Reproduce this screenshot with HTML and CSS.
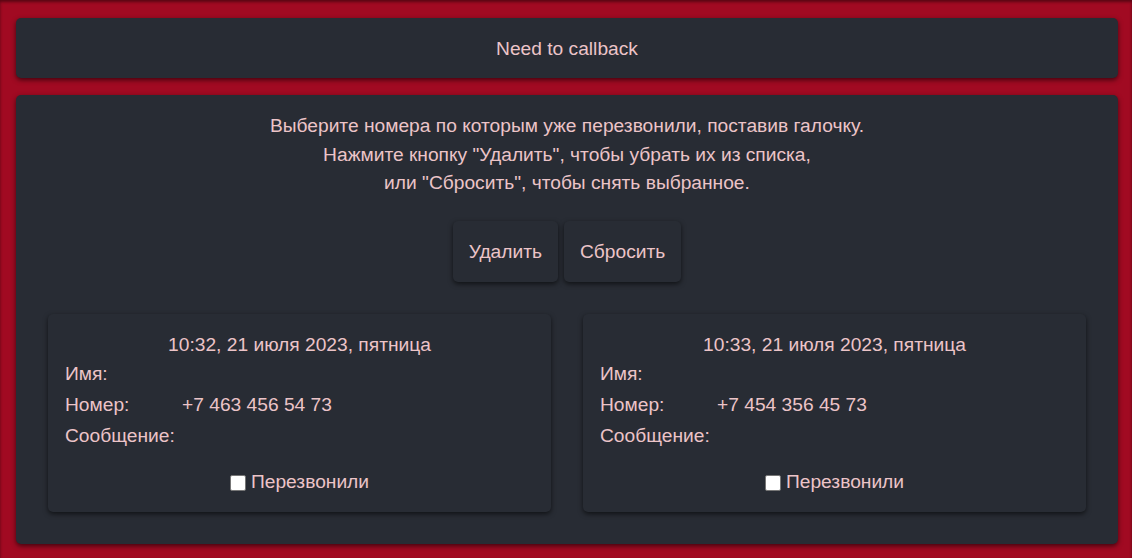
FILE: index.html
```html
<!DOCTYPE html>
<html lang="ru">
<head>
<meta charset="utf-8">
<title>Need to callback</title>
<link rel="stylesheet" href="styles.css">
</head>
<body>
<div class="page">
  <header class="panel header">Need to callback</header>
  <main class="panel main">
    <p class="intro">Выберите номера по которым уже перезвонили, поставив галочку.<br>Нажмите кнопку "Удалить", чтобы убрать их из списка,<br>или "Сбросить", чтобы снять выбранное.</p>
    <div class="actions">
      <button class="btn">Удалить</button>
      <button class="btn">Сбросить</button>
    </div>
    <div class="cards">
      <div class="card">
        <div class="date">10:32, 21 июля 2023, пятница</div>
        <div class="fields">
          <span class="label">Имя:</span><span class="value"></span>
          <span class="label">Номер:</span><span class="value">+7 463 456 54 73</span>
          <span class="label">Сообщение:</span><span class="value"></span>
        </div>
        <label class="check"><span class="box"></span>Перезвонили</label>
      </div>
      <div class="card">
        <div class="date">10:33, 21 июля 2023, пятница</div>
        <div class="fields">
          <span class="label">Имя:</span><span class="value"></span>
          <span class="label">Номер:</span><span class="value">+7 454 356 45 73</span>
          <span class="label">Сообщение:</span><span class="value"></span>
        </div>
        <label class="check"><span class="box"></span>Перезвонили</label>
      </div>
    </div>
  </main>
</div>
</body>
</html>
```
FILE: styles.css
```css
html, body {
  margin: 0;
  padding: 0;
  height: 100%;
}
body {
  background: #a10a22;
  box-shadow: inset 0 2px 3px rgba(0, 0, 0, 0.45);
  font-family: "Liberation Sans", Arial, sans-serif;
  font-size: 19.2px;
  line-height: 1.5;
  color: #ecc4c8;
  overflow: hidden;
}
.page {
  padding: 18px 14px 0 16px;
  display: flex;
  flex-direction: column;
  gap: 17px;
}
.panel {
  background: #282c34;
  border-radius: 5px;
  box-shadow: 0 2px 5px rgba(0, 0, 0, 0.6);
}
.header {
  padding: 17px 16px 15px;
  height: 60px;
  box-sizing: border-box;
  display: flex;
  align-items: center;
  justify-content: center;
}
.main {
  padding: 17px 32px 32px;
  display: flex;
  flex-direction: column;
  align-items: center;
}
.intro {
  margin: 0;
  text-align: center;
  line-height: 28.5px;
}
.actions {
  margin-top: 23px;
  display: flex;
  gap: 6px;
}
.btn {
  font: inherit;
  color: inherit;
  background: #282c34;
  border: none;
  border-radius: 5px;
  padding: 17px 16px 15px;
  height: 61px;
  box-sizing: border-box;
  box-shadow: 0 2px 5px rgba(0, 0, 0, 0.6);
  cursor: pointer;
}
.cards {
  margin-top: 32px;
  width: 100%;
  display: grid;
  grid-template-columns: 1fr 1fr;
  gap: 32px;
}
.card {
  background: #282c34;
  border-radius: 5px;
  box-shadow: 0 2px 5px rgba(0, 0, 0, 0.6);
  padding: 17px 17px 16px;
  height: 198px;
  box-sizing: border-box;
  display: flex;
  flex-direction: column;
}
.date {
  text-align: center;
  line-height: 28.5px;
}
.fields {
  display: grid;
  grid-template-columns: 117px 1fr;
  grid-auto-rows: 31px;
  align-items: center;
}
.check {
  margin-top: 16px;
  display: flex;
  align-items: center;
  justify-content: center;
  gap: 5px;
}
.box {
  width: 14px;
  height: 14px;
  background: #fff;
  border: 1px solid #767676;
  border-radius: 2px;
  margin-top: 2px;
}
```
